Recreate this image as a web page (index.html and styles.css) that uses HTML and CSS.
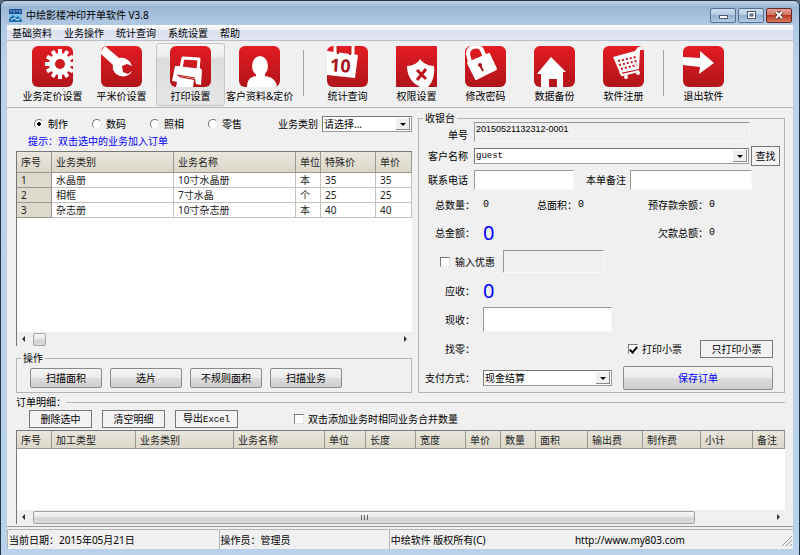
FILE: index.html
```
<!DOCTYPE html>
<html lang="zh-CN">
<head>
    <meta charset="UTF-8">
    <meta name="viewport" content="width=device-width, initial-scale=1.0">
    <title>中绘影楼冲印开单软件 V3.8</title>
    <link rel="stylesheet" href="styles.css">
</head>
<body>
    <div class="window">
        <header class="titlebar">
            <svg class="logo" viewBox="0 0 13 13">
                <rect width="13" height="13" fill="#7fc4e8"/>
                <rect width="13" height="5" fill="#1b4f94"/>
                <path d="M1 2h2M5 1v3M7 2h2M11 1v3" stroke="#8fc3ea"/>
                <path d="M0 10l4-4 3 3 2-2 4 4v2H0z" fill="#1d6fb0"/>
                <path d="M2 11l3-2 3 2 3-1" stroke="#e8f6ff" fill="none"/>
            </svg>
            <h1>中绘影楼冲印开单软件 V3.8</h1>
            <div class="controls">
                <button aria-label="最小化"><svg viewBox="0 0 12 10"><rect x="2.500" y="5.500" width="8" height="3" fill="#fff" stroke="#4a5a70"/></svg></button>
                <button aria-label="最大化"><svg viewBox="0 0 12 10"><rect x="2.500" y="1.500" width="8" height="7" fill="#fff" stroke="#4a5a70"/><rect x="5" y="4" width="3" height="2" fill="#8fa9c8" stroke="#4a5a70"/></svg></button>
                <button class="close" aria-label="关闭"><svg viewBox="0 0 12 10"><path d="M3 2l6 6M9 2L3 8" stroke="#5d3434" stroke-width="4"/><path d="M3 2l6 6M9 2L3 8" stroke="#fff" stroke-width="2"/></svg></button>
            </div>
        </header>

        <nav class="menu">
            <a href="#">基础资料</a>
            <a href="#">业务操作</a>
            <a href="#">统计查询</a>
            <a href="#">系统设置</a>
            <a href="#">帮助</a>
        </nav>

        <div class="toolbar">
            <button class="tool">
                <svg viewBox="0 0 41 41">
                    <g transform="translate(28 18)" fill="#fff">
                        <circle r="11"/>
                        <path d="M0-15V15M-13-7.500L13 7.500M-13 7.500L13-7.500M-7.500-13L7.500 13M-7.500 13L7.500-13M-15 0H13" stroke="#fff" stroke-width="4"/>
                        <circle r="5" fill="#cf1a20"/>
                    </g>
                </svg>
                业务定价设置
            </button>
            <button class="tool">
                <svg viewBox="0 0 41 41">
                    <path d="M0 5L4 0L18 12C21 11 26 12 29 16L31 20L26 18L21 20L22 26L27 28L31 25C29 30 22 32 17 29C13 27 11 23 12 19L0 8Z" fill="#fff"/>
                </svg>
                平米价设置
            </button>
            <button class="tool active">
                <svg viewBox="0 0 41 41">
                    <path d="M13 12L29 13L28 24L11 22Z" fill="none" stroke="#fff" stroke-width="3" stroke-linejoin="round"/>
                    <path d="M5 20L11 20L10 23L28 25L29 21L32 24L31 39L26 38L25 33L9 30L8 36L2 35Z" fill="#fff"/>
                    <path d="M8 31L24 34L23 41H6Z" fill="#fff"/>
                    <path d="M7 29L25 32" stroke="#b8161b" stroke-width="1"/>
                </svg>
                打印设置
            </button>
            <button class="tool">
                <svg viewBox="0 0 41 41">
                    <ellipse cx="21" cy="20" rx="8" ry="10" fill="#fff"/>
                    <path d="M17 26H26V30C33 31 37 34 38 41H8C8 34 11 31 17 30Z" fill="#fff"/>
                </svg>
                客户资料&amp;定价
            </button>
            <i class="sep"></i>
            <button class="tool">
                <svg viewBox="0 0 41 41">
                    <path d="M0 5L31 9L28 32L0 29Z" fill="#fff"/>
                    <path d="M8 0V6M26 0V9" stroke="#fff" stroke-width="3"/>
                    <path d="M11 1V8M23 1V9" stroke="#c4181d" stroke-width="2"/>
                    <text x="3" y="26" font-size="18" font-weight="bold" fill="#a5151b" transform="rotate(4 14 20)">10</text>
                </svg>
                统计查询
            </button>
            <button class="tool">
                <svg class="square" viewBox="0 0 41 41">
                    <path d="M11 20C17 20 22 17 24 13C27 17 32 20 38 20C39 30 36 37 32 41H24C16 37 11 30 11 20Z" fill="#fff"/>
                    <path d="M21 24L30 33M30 23L21 34" stroke="#b8161b" stroke-width="3"/>
                </svg>
                权限设置
            </button>
            <button class="tool">
                <svg viewBox="0 0 41 41">
                    <path d="M5 16L3 8C3 0 14-2 17 4L20 11" fill="none" stroke="#fff" stroke-width="4"/>
                    <path d="M3 17L24 8L31 23L11 33Z" fill="#fff" stroke="#fff" stroke-width="2" stroke-linejoin="round"/>
                    <circle cx="15" cy="19" r="2" fill="#a5151b"/>
                    <path d="M15 19L18 25" stroke="#a5151b" stroke-width="2"/>
                </svg>
                修改密码
            </button>
            <button class="tool">
                <svg viewBox="0 0 41 41">
                    <path d="M17 11L32 26H29L29 41H23V33H15V41H7V28H3Z" fill="#fff"/>
                </svg>
                数据备份
            </button>
            <button class="tool">
                <svg viewBox="0 0 41 41">
                    <path d="M41 1H35L32 5L10 11L17 27L36 23L37 4L41 4Z" fill="#fff"/>
                    <path d="M15 15L33 11M16 19L34 15M18 23L34 19" stroke="#c0181d" stroke-width="2" stroke-dasharray="2 2"/>
                    <path d="M17 26L19 29L36 25" fill="none" stroke="#fff" stroke-width="2"/>
                    <circle cx="23" cy="31" r="2" fill="#fff"/>
                    <circle cx="35" cy="27" r="2" fill="#fff"/>
                </svg>
                软件注册
            </button>
            <i class="sep tight"></i>
            <button class="tool">
                <svg viewBox="0 0 41 41">
                    <path d="M0 11L17 12V5L31 17L16 28L17 21L0 19Z" fill="#fff"/>
                </svg>
                退出软件
            </button>
        </div>

        <main>
            <section class="left">
                <div class="filter">
                    <label class="radio"><input type="radio" name="type" checked>制作</label>
                    <label class="radio"><input type="radio" name="type">数码</label>
                    <label class="radio"><input type="radio" name="type">照相</label>
                    <label class="radio"><input type="radio" name="type">零售</label>
                    <label class="kind" for="kind">业务类别</label>
                    <span class="select"><select id="kind"><option>请选择...</option></select></span>
                </div>
                <p class="hint">提示：双击选中的业务加入订单</p>

                <div class="list">
                    <table class="goods">
                        <colgroup><col class="w35"><col class="w122"><col class="w122"><col class="w25"><col class="w55"><col></colgroup>
                        <thead>
                            <tr><th>序号</th><th>业务类别</th><th>业务名称</th><th>单位</th><th>特殊价</th><th>单价</th></tr>
                        </thead>
                        <tbody>
                            <tr><th>1</th><td>水晶册</td><td>10寸水晶册</td><td>本</td><td>35</td><td>35</td></tr>
                            <tr><th>2</th><td>相框</td><td>7寸水晶</td><td>个</td><td>25</td><td>25</td></tr>
                            <tr><th>3</th><td>杂志册</td><td>10寸杂志册</td><td>本</td><td>40</td><td>40</td></tr>
                        </tbody>
                    </table>
                    <div class="scroll"><i class="arrow prev"></i><div class="track"><div class="thumb small"></div></div><i class="arrow next"></i></div>
                </div>

                <fieldset class="ops">
                    <legend>操作</legend>
                    <div class="buttons">
                        <button class="btn">扫描面积</button>
                        <button class="btn">选片</button>
                        <button class="btn">不规则面积</button>
                        <button class="btn">扫描业务</button>
                    </div>
                </fieldset>
            </section>

            <fieldset class="cashier">
                <legend>收银台</legend>
                <div class="row top">
                    <label class="low" for="no">单号</label>
                    <input id="no" class="no" value="20150521132312-0001" readonly>
                </div>
                <div class="row top">
                    <label for="client">客户名称</label>
                    <span class="select client"><select id="client"><option>guest</option></select></span>
                    <button class="flat find">查找</button>
                </div>
                <div class="row top">
                    <label for="tel">联系电话</label>
                    <input id="tel" class="tel">
                    <label for="memo">本单备注</label>
                    <input id="memo" class="memo">
                </div>
                <div class="sums">
                    <span>总数量：</span><b>0</b>
                    <span>总面积：</span><b>0</b>
                    <span>预存款余额：</span><b>0</b>
                </div>
                <div class="sums tall">
                    <span>总金额：</span><b class="big">0</b>
                    <span></span><b></b>
                    <span>欠款总额：</span><b>0</b>
                </div>
                <div class="row discount">
                    <label class="check"><input type="checkbox">输入优惠</label>
                    <input class="off" aria-label="优惠" disabled>
                </div>
                <div class="sums tall">
                    <span>应收：</span><b class="big">0</b>
                </div>
                <div class="row">
                    <label for="cash">现收：</label>
                    <input id="cash" class="cash">
                </div>
                <div class="row">
                    <label>找零：</label>
                    <div class="right">
                        <label class="check"><input type="checkbox" checked>打印小票</label>
                        <button class="flat print">只打印小票</button>
                    </div>
                </div>
                <div class="row">
                    <label for="pay">支付方式：</label>
                    <span class="select pay"><select id="pay"><option>现金结算</option></select></span>
                    <button class="btn save">保存订单</button>
                </div>
            </fieldset>
        </main>

        <section class="bottom">
            <fieldset class="order">
                <legend>订单明细：</legend>
                <div class="actions">
                    <button class="flat">删除选中</button>
                    <button class="flat">清空明细</button>
                    <button class="flat">导出<span class="mono">Excel</span></button>
                    <label class="check"><input type="checkbox">双击添加业务时相同业务合并数量</label>
                </div>
            </fieldset>
            <div class="list">
                <table>
                    <colgroup><col class="w35"><col class="w84"><col class="w98"><col class="w91"><col class="w41"><col class="w50"><col class="w50"><col class="w35"><col class="w35"><col class="w52"><col class="w55"><col class="w58"><col class="w52"><col></colgroup>
                    <thead>
                        <tr><th>序号</th><th>加工类型</th><th>业务类别</th><th>业务名称</th><th>单位</th><th>长度</th><th>宽度</th><th>单价</th><th>数量</th><th>面积</th><th>输出费</th><th>制作费</th><th>小计</th><th>备注</th></tr>
                    </thead>
                </table>
                <div class="scroll"><i class="arrow prev"></i><div class="track"><div class="thumb"><i class="grip"></i></div></div><i class="arrow next"></i></div>
            </div>
        </section>

        <footer class="status">
            <div class="date">当前日期：2015年05月21日</div>
            <div class="user">操作员：管理员</div>
            <div class="copy"><span>中绘软件 版权所有(C)</span><a href="#">http://www.my803.com</a>
                <svg viewBox="0 0 10 10"><path d="M0 10L10 0M4 10L10 4M8 10L10 8" stroke="#999"/></svg>
            </div>
        </footer>
    </div>
</body>
</html>
```

FILE: styles.css
```
*{
    box-sizing: border-box;
}
body{
    margin: 0;
    background-color: #5d6b78;
    color: #000;
    font-family: "Noto Sans", "Noto Sans CJK SC", sans-serif;
    font-size: 10px;
    line-height: 14px;
}
button, input, select{
    margin: 0;
    font: inherit;
    color: inherit;
    border-radius: 0;
}
a{
    color: inherit;
    text-decoration: none;
}
fieldset{
    margin: 0;
    padding: 0;
    min-width: 0;
    border: 1px solid #b4b4b4;
}
legend{
    padding: 0 2px;
    line-height: 8px;
}

/* window frame */
.window{
    min-height: 100vh;
    display: flex;
    flex-direction: column;
    padding: 0 6px 6px;
    border: 1px solid #1f3347;
    border-radius: 6px 6px 0 0;
    background: linear-gradient(to bottom, #c3d5e8 0, #9bb7d5 6px, #b2c9e3 24px, #bdd2e9 60px, #b9d1ea 100%);
}
.titlebar{
    display: flex;
    align-items: center;
    height: 24px;
    padding: 4px 1px 0 2px;
}
.logo{
    width: 13px;
    height: 13px;
}
h1{
    flex: 1;
    margin: 0 0 0 4px;
    font-size: 10px;
    font-weight: normal;
}
.controls{
    display: flex;
    gap: 2px;
}
.controls button{
    width: 26px;
    height: 15px;
    padding: 0;
    border: 1px solid #56708f;
    border-radius: 2px;
    background: linear-gradient(#cfdff0, #b3c9e2 45%, #94b0d0 50%, #b4cce6);
}
.controls .close{
    border-color: #642a2a;
    background: linear-gradient(#e5a397, #d2725f 45%, #bb3a22 50%, #d57a5c);
}
.controls svg{
    display: block;
    width: 12px;
    height: 10px;
    margin: 1px auto;
}

.menu{
    display: flex;
    gap: 12px;
    height: 16px;
    padding: 1px 5px;
    background: linear-gradient(#fff, #eef1f8 30%, #dbe0f0 40%, #e3e7f5);
    border-bottom: 1px solid #b9bfca;
}

/* toolbar */
.toolbar{
    display: flex;
    height: 67px;
    padding: 2px 11px 1px;
    background: #f0f0f0;
    border-bottom: 1px solid #b4b4b4;
}
.tool{
    width: 69px;
    padding: 0;
    border: 1px solid transparent;
    background: none;
    white-space: nowrap;
}
.tool svg{
    display: block;
    width: 41px;
    height: 41px;
    margin: 0 auto 2px;
    overflow: hidden;
    border-radius: 6px;
    background: linear-gradient(#e31b23, #b0151a);
}
.tool .square{
    border-radius: 1px;
}
.tool.active{
    border-color: #c4c4c4;
    border-radius: 3px;
    background: linear-gradient(#f4f4f4, #ededed 20%, #dcdcdc 25%, #e6e6e6);
}
.sep{
    width: 1px;
    margin: 7px 9px 10px;
    background: #a5a5a5;
}
.sep.tight{
    margin: 7px 5px 10px;
}

main{
    display: grid;
    grid-template-columns: 396fr 367fr;
    gap: 6px;
    padding: 6px 8px 0 9px;
    background: #f0f0f0;
}
.left{
    display: flex;
    flex-direction: column;
    min-width: 0;
}
.filter{
    display: flex;
    align-items: center;
    height: 20px;
    padding-left: 18px;
}
.radio, .check{
    display: flex;
    align-items: center;
    gap: 4px;
    white-space: nowrap;
}
.radio{
    width: 58px;
}
input[type=radio], input[type=checkbox]{
    appearance: none;
    flex: none;
    width: 10px;
    height: 10px;
    padding: 0;
    background: #fff;
    border: 1px solid;
    border-color: #777 #e4e4e4 #e4e4e4 #777;
}
input[type=radio]{
    border-radius: 50%;
}
input[type=radio]:checked{
    background: radial-gradient(circle, #000 2px, #fff 2px);
}
/* tick: two strokes of a rotated corner */
input[type=checkbox]:checked::before{
    content: "";
    display: block;
    width: 3px;
    height: 6px;
    margin: 0 auto;
    border: solid #000;
    border-width: 0 2px 2px 0;
    transform: rotate(40deg);
}
.kind{
    margin: 0 4px 0 auto;
}
.select{
    position: relative;
    display: flex;
    width: 90px;
    height: 16px;
}
.select select{
    appearance: none;
    width: 100%;
    padding: 0 16px 0 1px;
    background: #fff;
    border: 1px solid;
    border-color: #777 #999 #999 #777;
    line-height: 12px;
}
.select::before{
    content: "";
    position: absolute;
    top: 2px;
    right: 2px;
    bottom: 2px;
    width: 13px;
    background: #f0f0f0;
    border: solid #888;
    border-width: 0 1px 1px 0;
    pointer-events: none;
}
.select::after{
    content: "";
    position: absolute;
    top: 7px;
    right: 6px;
    border: 3px solid transparent;
    border-top-color: #000;
    border-bottom: 0;
    pointer-events: none;
}
.hint{
    margin: 0 0 3px 12px;
    color: #00f;
}

/* lists */
.list{
    flex: 1;
    display: flex;
    flex-direction: column;
    background: #fff;
    border-top: 1px solid #777;
    border-left: 1px solid #777;
}
table{
    width: 100%;
    table-layout: fixed;
    border-collapse: separate;
    border-spacing: 0;
    line-height: 12px;
    color: #222;
}
th, td{
    height: 15px;
    padding: 0 0 0 4px;
    text-align: left;
    font-weight: normal;
    white-space: nowrap;
    overflow: hidden;
    border: solid #c6c3bc;
    border-width: 0 1px 1px 0;
}
th{
    background: #dedacd;
    border-color: #9b988f;
}
thead th{
    height: 18px;
    background: linear-gradient(#e9e6dc, #dbd7ca);
}
.goods thead th{
    height: 21px;
}
.w25{ width: 25px; }
.w35{ width: 35px; }
.w41{ width: 41px; }
.w50{ width: 50px; }
.w52{ width: 52px; }
.w55{ width: 55px; }
.w58{ width: 58px; }
.w84{ width: 84px; }
.w91{ width: 91px; }
.w98{ width: 98px; }
.w122{ width: 122px; }

.scroll{
    display: flex;
    align-items: center;
    height: 14px;
    margin-top: auto;
    background: #f0f0f0;
}
.arrow{
    border: 3px solid transparent;
    margin: 0 5px;
}
.prev{
    border-left-width: 0;
    border-right-color: #333;
}
.next{
    border-right-width: 0;
    border-left-color: #333;
}
.track{
    flex: 1;
    padding: 0 3px;
}
.thumb{
    display: flex;
    justify-content: center;
    align-items: center;
    width: 90%;
    height: 13px;
    border: 1px solid #a3a3a3;
    border-radius: 2px;
    background: linear-gradient(#f6f6f6, #e6e6e6 48%, #d2d2d2 52%, #dcdcdc);
}
.thumb.small{
    width: 13px;
}
.grip{
    width: 7px;
    height: 5px;
    background: repeating-linear-gradient(to right, #666 0 1px, transparent 1px 3px);
}

/* buttons */
.btn{
    width: 72px;
    height: 20px;
    padding: 0;
    border: 1px solid #8a8a8a;
    border-radius: 2px;
    background: linear-gradient(#f4f4f4, #ebebeb 48%, #dcdcdc 52%, #d0d0d0);
}
.flat{
    height: 18px;
    padding: 0;
    border: 1px solid #777;
    background: #f3f3f3;
    line-height: 12px;
}
.btn:hover, .flat:hover{
    opacity: .8;
}
.mono{
    font-family: "Liberation Mono", monospace;
    font-size: 9px;
}
.ops{
    margin-top: 8px;
    padding: 6px 4px 4px;
}
.buttons{
    display: flex;
    gap: 8px;
    padding-left: 9px;
}

/* cashier */
.cashier{
    padding: 0 4px 2px 3px;
}
.cashier legend{
    margin-left: 1px;
}
.row{
    display: flex;
    align-items: center;
    gap: 8px;
    height: 25px;
    margin-bottom: 4px;
}
.row:last-child{
    margin-bottom: 0;
}
.row > label{
    flex: none;
    width: 53px;
    text-align: right;
}
.row.top{
    gap: 6px;
    height: 20px;
}
.row.top > label{
    width: 46px;
}
.row .low{
    align-self: flex-end;
}
.row > input{
    min-width: 0;
    height: 20px;
    padding: 0 1px;
    background: #fff;
    border: 1px solid;
    border-color: #999 #f8f8f8 #f8f8f8 #999;
}
.row > .no{
    flex: 1;
    margin-right: 30px;
    padding-bottom: 6px;
    background: #f0f0f0;
    font-family: "Liberation Sans", sans-serif;
    font-size: 9px;
}
.client{
    flex: 1;
}
.client select{
    font-family: "Liberation Mono", monospace;
    font-size: 9px;
}
.row .find{
    width: 29px;
    height: 20px;
    margin-left: -4px;
}
.tel{
    flex: 101;
}
.memo{
    flex: 124;
    margin: 0 28px 0 -2px;
}
.sums{
    display: grid;
    grid-template-columns: 53px 52fr 50px 66fr 65px 72fr;
    align-items: center;
    height: 22px;
    margin-bottom: 4px;
    text-align: right;
}
.sums.tall{
    height: 25px;
}
.sums b{
    padding-left: 8px;
    font-family: "Liberation Mono", monospace;
    font-weight: normal;
    text-align: left;
}
.sums b + span + b{
    padding-left: 1px;
}
.sums .big{
    color: #00f;
    font-family: "Noto Sans", sans-serif;
    font-size: 20px;
    line-height: 24px;
}
.discount{
    padding-left: 18px;
}
.discount .check{
    gap: 5px;
}
.row > .check{
    width: auto;
}
.row > .off{
    width: 101px;
    height: 23px;
    background: #f0f0f0;
}
.row > .cash{
    width: 129px;
    height: 25px;
}
.right{
    display: flex;
    align-items: center;
    gap: 18px;
    margin: 0 7px 0 auto;
}
.print{
    width: 73px;
}
.pay{
    width: 129px;
}
.save{
    flex: 1;
    height: 24px;
    margin: 0 7px 0 3px;
    color: #00f;
}

/* order detail */
.bottom{
    flex: 1;
    display: flex;
    flex-direction: column;
    padding: 5px 8px 2px 9px;
    background: #f0f0f0;
}
.order{
    border-width: 1px 0 0;
}
.order legend{
    padding: 0;
}
.actions{
    display: flex;
    align-items: center;
    gap: 10px;
    padding: 4px 0 2px 13px;
}
.actions .flat{
    width: 63px;
}
.actions .check{
    margin-left: 46px;
}
.bottom .list{
    min-height: 94px;
}

.status{
    display: flex;
    gap: 1px;
    padding-top: 2px;
    background: #f0f0f0;
    border-top: 1px solid #999;
}
.status > div{
    height: 20px;
    padding: 3px 1px;
    border-top: 1px solid #b4b4b4;
    border-left: 1px solid #b4b4b4;
}
.date{
    flex: 210;
}
.user{
    flex: 168;
}
.copy{
    flex: 406;
    display: flex;
}
.copy span{
    flex: 185;
}
.copy a{
    flex: 208;
}
.copy svg{
    align-self: flex-end;
    width: 10px;
    height: 10px;
}
```
